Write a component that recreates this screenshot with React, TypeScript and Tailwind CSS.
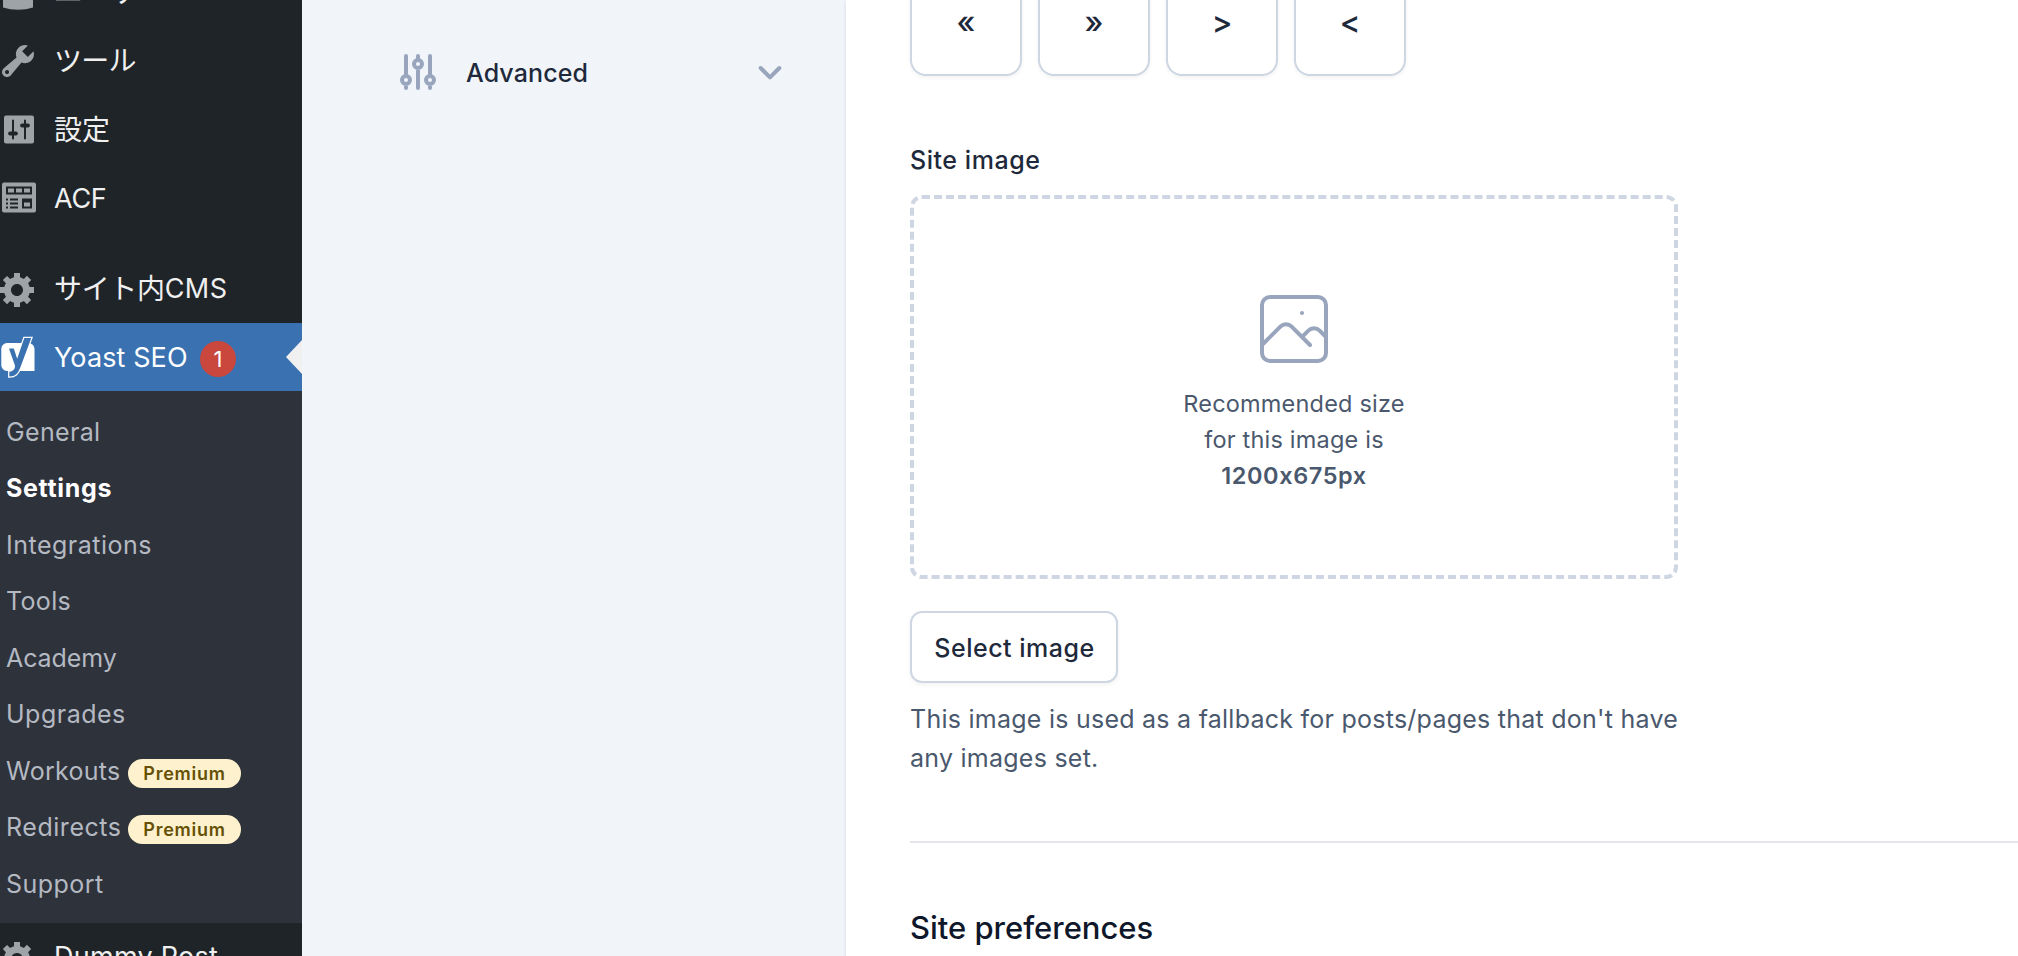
import type { ReactNode } from "react";

const GEAR =
  "M18 12h-2.18c-.17.7-.44 1.35-.81 1.93l1.54 1.54-2.1 2.1-1.54-1.54c-.58.36-1.23.63-1.91.79V19H8v-2.18c-.68-.16-1.33-.43-1.91-.79l-1.54 1.54-2.12-2.12 1.54-1.54c-.36-.58-.63-1.23-.79-1.91H1V9.03h2.17c.16-.7.44-1.35.8-1.94L2.43 5.55l2.1-2.1 1.54 1.54c.58-.37 1.24-.64 1.93-.81V2h3v2.18c.68.16 1.33.43 1.91.79l1.54-1.54 2.12 2.12-1.54 1.54c.36.59.64 1.24.8 1.94H18V12zm-8.5 1.5c1.66 0 3-1.34 3-3s-1.34-3-3-3-3 1.34-3 3 1.34 3 3 3z";
const WRENCH =
  "M16.68 9.77c-1.34 1.34-3.3 1.67-4.95.99l-5.41 6.52c-.99.99-2.59.99-3.58 0s-.99-2.59 0-3.57l6.52-5.42c-.68-1.65-.35-3.61.99-4.95 1.28-1.28 3.12-1.62 4.72-1.06l-2.89 2.89 2.82 2.82 2.86-2.87c.53 1.58.18 3.39-1.08 4.65zM3.81 16.21c.4.39 1.04.39 1.43 0 .4-.4.4-1.04 0-1.43-.39-.4-1.03-.4-1.43 0-.39.39-.39 1.03 0 1.43z";

function DashIcon({ d }: { d: string }) {
  return (
    <svg viewBox="0 0 20 20" className="-ml-0.5 h-10 w-10 fill-[#9ea3a8]">
      <path d={d} />
    </svg>
  );
}

function UsersIcon() {
  return (
    <svg viewBox="0 0 40 40" className="h-10 w-10 fill-[#9ea3a8]">
      <path d="M3 24a8 8 0 0 1 8-8h14a8 8 0 0 1 8 8v11.5q-7 2.300-15 2.300T3 35.500z" />
    </svg>
  );
}

function SlidersIcon() {
  return (
    <svg viewBox="0 0.5 40 40" className="h-10 w-10">
      <rect x="4" y="6" width="30" height="28" rx="2" fill="#9ea3a8" />
      <g stroke="#1f2428" strokeWidth="2" strokeLinecap="round">
        <path d="M13 11v18M25 11v18" />
        <path d="M10.200 24h5.600M22.200 16h5.600" strokeWidth="4.200" />
      </g>
    </svg>
  );
}

function FieldsIcon() {
  return (
    <svg viewBox="0 0 40 40" className="h-10 w-10">
      <rect x="2" y="3.500" width="34" height="30" rx="2" fill="#9ea3a8" />
      <g fill="#1f2428">
        <path d="M6 7.500h26v8H6zM22 19.500h10v10H22z" />
        <path d="M6 19.500h2v2H6zM10 19.500h8v2h-8zM6 23.500h2v2H6zM10 23.500h8v2h-8zM6 27.500h2v2H6zM10 27.500h8v2h-8z" />
      </g>
      <path fill="#9ea3a8" d="M8 9.500h6v4H8zM16 9.500h6v4h-6zM24 9.500h6v4h-6zM24 23.500h6v4h-6z" />
    </svg>
  );
}

const YOAST_LETTER =
  "M9 13.500h4.800l3.400 10.200L24.300 3h7L20.300 32.500C18 38.500 15.500 41.500 9.300 41.500v-4.700c3.500-.5 5-2.300 5.600-4.300.3-1 .1-2-.3-3z";

function YoastIcon() {
  return (
    <svg viewBox="0 0 40 44" className="h-11 w-10">
      <path d="M7 8h21.500a6 6 0 0 1 6 6v22H7a5.700 5.700 0 0 1-5.700-5.700V13.700A5.700 5.700 0 0 1 7 8z" fill="#fff" />
      <path d={YOAST_LETTER} fill="none" stroke="#fff" strokeWidth="2.400" />
      <path d={YOAST_LETTER} fill="#3a71b1" />
    </svg>
  );
}

function MenuRow({ icon, children }: { icon: ReactNode; children: ReactNode }) {
  return (
    <li className="flex h-[69px] shrink-0 items-center text-[27px] text-[#f0f0f1]">
      <span className="flex w-[54px] shrink-0">{icon}</span>
      {children}
    </li>
  );
}

function Kana({ children, className = "" }: { children: ReactNode; className?: string }) {
  return <span className={`pb-1 font-['Noto_Sans_CJK_JP',sans-serif] text-[28px] leading-[40px] ${className}`}>{children}</span>;
}

const submenu = [
  { label: "General", tracking: "tracking-[0.33px]" },
  { label: "Settings", tracking: "tracking-[0.67px]", current: true },
  { label: "Integrations", tracking: "tracking-[0.5px]" },
  { label: "Tools", tracking: "tracking-[0.32px]" },
  { label: "Academy", tracking: "tracking-[-0.1px]" },
  { label: "Upgrades", tracking: "tracking-[0.5px]" },
  { label: "Workouts", tracking: "tracking-[0.28px]", premium: true },
  { label: "Redirects", tracking: "tracking-[0.55px]", premium: true },
  { label: "Support", tracking: "tracking-[0.46px]" },
];

function AdminMenu() {
  return (
    <nav className="h-full w-[302px] shrink-0 overflow-hidden bg-[#1f2428]">
      <ul className="-mt-[43px] flex flex-col">
        <MenuRow icon={<UsersIcon />}>
          <Kana>ユーザー</Kana>
        </MenuRow>
        <MenuRow icon={<DashIcon d={WRENCH} />}>
          <Kana className="tracking-[-0.8px]">ツール</Kana>
        </MenuRow>
        <MenuRow icon={<SlidersIcon />}>
          <Kana>設定</Kana>
        </MenuRow>
        <MenuRow icon={<FieldsIcon />}>
          <span className="pt-0.5 tracking-[-0.3px]">ACF</span>
        </MenuRow>
        <li className="h-[21px]" />
        <MenuRow icon={<DashIcon d={GEAR} />}>
          <Kana className="tracking-[-0.33px]">サイト内</Kana>
          <span className="pt-0.5 tracking-[0.44px]">CMS</span>
        </MenuRow>
        <li className="flex h-[68px] items-center bg-[#3a71b1] text-[27px] text-white">
          <span className="w-[54px] shrink-0">
            <YoastIcon />
          </span>
          <span className="w-[134px] pt-0.5 tracking-[0.1px] whitespace-nowrap">Yoast SEO</span>
          <span className="mt-1 ml-3 flex size-9 items-center justify-center rounded-full bg-[#c9473d] text-[22px]">1</span>
          <svg viewBox="0 0 16 34" className="ml-auto h-[34px] w-4 fill-[#f0f0f1]">
            <path d="M16 0v34L0 17z" />
          </svg>
        </li>
        <li className="h-[532px] bg-[#2e323a] pt-[13px]">
          <ul className="text-[25px] text-[#b4b9c2]">
            {submenu.map((s) => (
              <li key={s.label} className="flex h-[56.5px] items-center pl-[6px]">
                <span className={`w-[122px] shrink-0 whitespace-nowrap ${s.tracking} ${s.current ? "font-bold text-white" : ""}`}>
                  {s.label}
                </span>
                {s.premium && (
                  <span className="mt-1 flex h-[29px] w-[113px] items-center justify-center rounded-full bg-[#fdf2cd] text-[18px] font-semibold tracking-[0.73px] text-[#665006]">
                    Premium
                  </span>
                )}
              </li>
            ))}
          </ul>
        </li>
        <MenuRow icon={<DashIcon d={GEAR} />}>
          <span className="tracking-[0.26px]">Dummy Post</span>
        </MenuRow>
      </ul>
    </nav>
  );
}

function SettingsNav() {
  return (
    <aside className="w-[544px] shrink-0 bg-[#f1f5fa] pt-12">
      <button className="flex h-12 w-full items-center pr-[60px] pl-[92px] text-[#1e293b]">
        <svg viewBox="0 0 24 24" className="size-12 fill-none stroke-[#98a5bc] stroke-2" strokeLinecap="round" strokeLinejoin="round">
          <path d="M12 6V4m0 2a2 2 0 100 4m0-4a2 2 0 110 4m-6 8a2 2 0 100-4m0 4a2 2 0 110-4m0 4v2m0-6V4m6 6v10m6-2a2 2 0 100-4m0 4a2 2 0 110-4m0 4v2m0-6V4" />
        </svg>
        <span className="ml-6 pt-1 text-[25px] font-medium tracking-[0.11px]">Advanced</span>
        <svg viewBox="0 0 24 24" className="ml-auto size-8 fill-none stroke-[#98a5bc] stroke-3" strokeLinecap="round" strokeLinejoin="round">
          <path d="M19 9l-7 7-7-7" />
        </svg>
      </button>
    </aside>
  );
}

function SettingsPanel() {
  return (
    <main className="min-w-0 flex-1 overflow-hidden bg-white pl-16 text-[#1e293b] shadow-[0_2px_4px_rgba(0,0,0,0.12)]">
      <div className="-mt-9 flex gap-4">
        {["«", "»", ">", "<"].map((s) => (
          <span
            key={s}
            className="flex size-28 items-center justify-center rounded-2xl border-2 border-[#cdd6e2] pt-1 text-[31px] font-medium shadow-[0_2px_4px_rgba(0,0,0,0.05)]"
          >
            {s}
          </span>
        ))}
      </div>
      <div className="mt-[64px] text-[25px] leading-10 font-medium tracking-[0.55px]">Site image</div>
      <div className="mt-[15px] flex h-96 w-[768px] flex-col items-center rounded-xl border-4 border-dashed border-[#cdd6e2] pt-[82px] text-[23.5px] leading-9 text-[#4a586d]">
        <svg viewBox="0 0 24 24" className="size-24 fill-none stroke-[#98a5bc] stroke-1" strokeLinecap="round" strokeLinejoin="round">
          <path d="M4 16l4.586-4.586a2 2 0 012.828 0L16 16m-2-2l1.586-1.586a2 2 0 012.828 0L20 14m-6-6h.01M6 20h12a2 2 0 002-2V6a2 2 0 00-2-2H6a2 2 0 00-2 2v12a2 2 0 002 2z" />
        </svg>
        <span className="mt-[9px] tracking-[0.2px]">Recommended size</span>
        <span className="tracking-[0.2px]">for this image is</span>
        <span className="font-semibold tracking-[0.6px]">1200x675px</span>
      </div>
      <button className="mt-8 flex h-[72px] w-[208px] items-center justify-center rounded-xl border-2 border-[#cdd6e2] pt-[3px] pl-px text-[25px] font-medium tracking-[0.5px] shadow-[0_2px_4px_rgba(0,0,0,0.05)]">
        Select image
      </button>
      <p className="mt-[17px] w-[800px] text-[25px] leading-[39px] tracking-[0.25px] text-[#4a586d]">
        This image is used as a fallback for posts/pages that don't have
        <br />
        any images set.
      </p>
      <hr className="mt-[63px] border-t-2 border-[#e4e6eb]" />
      <h2 className="mt-[65px] text-[31px] leading-10 font-medium tracking-[-0.02px] text-[#0f172a]">Site preferences</h2>
    </main>
  );
}

export default function App() {
  return (
    <div className="flex h-[956px] w-[2018px] overflow-hidden font-[Inter,'Noto_Sans_CJK_JP',sans-serif] [font-feature-settings:'calt'_0]">
      <AdminMenu />
      <SettingsNav />
      <SettingsPanel />
    </div>
  );
}
